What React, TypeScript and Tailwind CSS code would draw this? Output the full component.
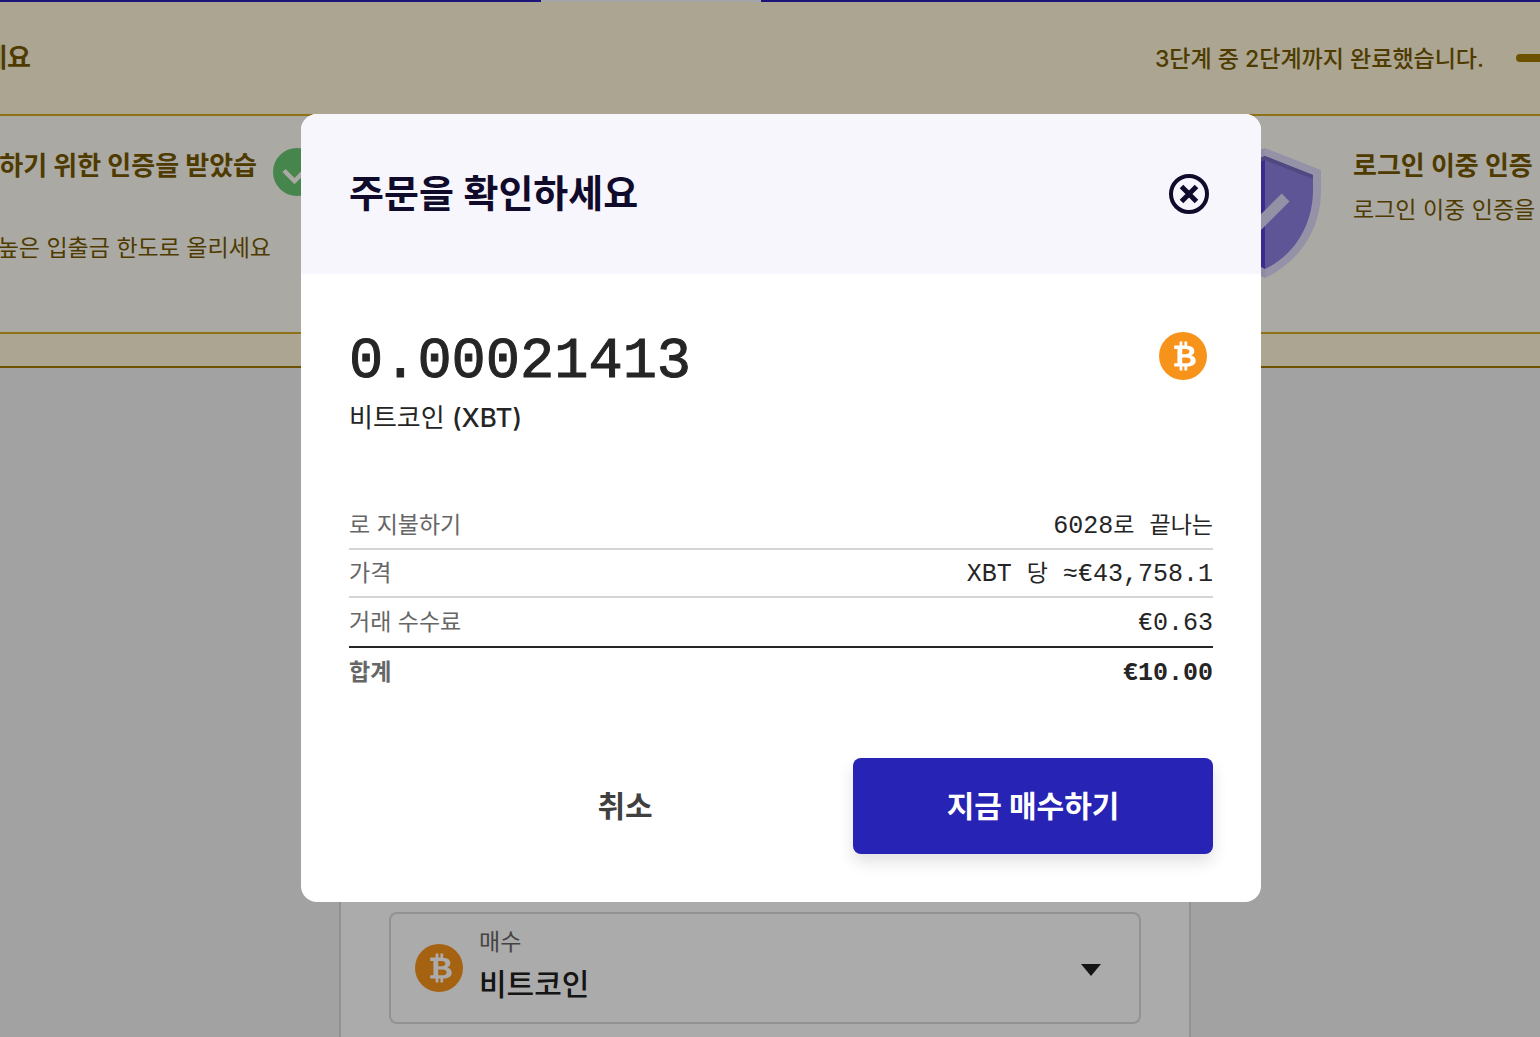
import React from "react";
import clsx from "clsx";

const CoinIcon = ({ className }: { className?: string }) => (
  <svg viewBox="0 0 48 48" className={clsx("size-12 shrink-0", className)} aria-hidden="true">
    <circle cx="24" cy="24" r="24" fill="#f7931a" />
    <path
      fill="#fff"
      fillRule="evenodd"
      d="M15.2 13.6H20.6V9.6H23.4V13.6H25.4V9.6H28.2V13.7C32.8 14 35.3 15.9 35.3 19C35.3 21.2 34.2 22.6 32.2 23.4C35 24 36.7 25.9 36.7 28.7C36.7 32.3 33.8 34.3 28.2 34.5V38.6H25.4V34.6H23.4V38.6H20.6V34.6H15.2V31.2H18.4V17H15.2ZM23.2 17V22.2H26.6C29.2 22.2 30.4 21.3 30.4 19.6C30.4 17.9 29.2 17 26.6 17ZM23.2 25.6V31.2H27.2C30.2 31.2 31.6 30.3 31.6 28.4C31.6 26.5 30.2 25.6 27.2 25.6Z"
    />
  </svg>
);

const ShieldIcon = () => (
  <svg viewBox="0 0 112 130" className="h-[130px] w-28 shrink-0" aria-hidden="true">
    <path fill="#d6cff8" d="M56 0L0 22V42C0 82 22 114 56 130Z" />
    <path fill="#dfdafb" d="M56 0L112 22V42C112 82 90 114 56 130Z" />
    <path fill="#5640d6" d="M56 8L8 27V42C8 78 28 108 56 121Z" />
    <path fill="#8d7fe0" d="M56 8L104 27V42C104 78 84 108 56 121Z" />
    <path fill="#766dc0" d="M56 8L104 27V31L56 12L8 31V27Z" />
    <path fill="#dcd8f8" d="M72.7 45.5L80.5 53.5L46 88L28 70L36 62L46 72Z" />
  </svg>
);

const Hangul = ({ children }: { children: React.ReactNode }) => (
  <span className="text-[23px]">{children}</span>
);

const rows = [
  { label: "로 지불하기", value: <>6028<Hangul>로</Hangul> <Hangul>끝나는</Hangul></>, line: "h-12 border-b-2 border-[#d5d5d5]" },
  { label: "가격", value: <>XBT <Hangul>당</Hangul> ≈€43,758.1</>, line: "h-12 border-b-2 border-[#d5d5d5]" },
  { label: "거래 수수료", value: "€0.63", line: "h-[50px] border-b-2 border-[#252525]" },
  { label: "합계", value: "€10.00", line: "h-12", total: true },
];

const VerificationBanner = () => (
  <section className="text-[#765900]">
    {/* Navigation edge */}
    <div className="flex h-0.5 bg-[#2a1eb3]">
      <div className="ml-[541px] w-[220px] bg-[#f7f5ff]" />
    </div>

    {/* Progress header */}
    <div className="flex h-[114px] items-center justify-between border-b-2 border-[#d5aa24] bg-[#fff7da]">
      <div className="flex w-[31px] justify-end overflow-hidden">
        <h2 className="text-[26px] leading-10 font-bold whitespace-nowrap">세요</h2>
      </div>
      <div className="flex items-center gap-8">
        <p className="pt-0.5 text-[23px] leading-8 font-medium">3단계 중 2단계까지 완료했습니다.</p>
        <div className="h-2 w-6 rounded-l-full bg-[#a17a00]" />
      </div>
    </div>

    {/* Steps */}
    <div className="flex h-[218px] items-start border-b-2 border-[#d5aa24] bg-[#fffdf5] pt-8">
      <div className="flex w-[273px] flex-col items-end overflow-hidden">
        <h3 className="pr-4 text-[26px] leading-9 font-bold whitespace-nowrap">하기 위한 인증을 받았습</h3>
        <p className="mt-12 pr-0.5 text-[23px] leading-8 whitespace-nowrap">높은 입출금 한도로 올리세요</p>
      </div>
      <svg viewBox="0 0 48 48" className="size-12 shrink-0" aria-hidden="true">
        <circle cx="24" cy="24" r="24" fill="#69c671" />
        <path d="M11 22.500L21.500 33L37 17.500" fill="none" stroke="#fffdf5" strokeWidth="4.500" />
      </svg>
      <div className="ml-auto flex gap-8">
        <ShieldIcon />
        <div className="w-[187px] overflow-hidden whitespace-nowrap">
          <h3 className="text-[26px] leading-9 font-bold">로그인 이중 인증</h3>
          <p className="mt-2.5 text-[23px] leading-8">로그인 이중 인증을</p>
        </div>
      </div>
    </div>

    <div className="h-[34px] border-b-2 border-[#a17a00] bg-[#fff7da]" />
  </section>
);

const BuyForm = () => (
  <section className="mx-auto mt-20 w-full max-w-[862px] pr-[10px]">
    <div className="border-2 border-[#dadada] bg-white px-12 pt-[462px] pb-12">
      <div className="flex h-28 items-center rounded-lg border-2 border-[#dadada] px-6">
        <CoinIcon />
        <div className="relative ml-4 flex flex-1 flex-col">
          <label htmlFor="asset" className="text-[23px] leading-8 text-[#666]">
            매수
          </label>
          <select
            id="asset"
            className="h-[52px] w-full appearance-none bg-transparent text-[30px] leading-10 font-medium text-[#202020]"
          >
            <option>비트코인</option>
          </select>
          <svg
            viewBox="0 0 20 12"
            className="pointer-events-none absolute right-3.5 bottom-[34px] h-3 w-5"
            aria-hidden="true"
          >
            <path d="M0 0H20L10 12Z" fill="#202020" />
          </svg>
        </div>
      </div>
    </div>
  </section>
);

const OrderDialog = () => (
  <div
    role="dialog"
    aria-modal="true"
    aria-labelledby="order-title"
    className="w-full max-w-[960px] overflow-hidden rounded-2xl bg-white text-[#252525]"
  >
    <header className="flex h-40 items-center justify-between bg-[#f7f6fd] px-12 text-[#100b2b]">
      <h1 id="order-title" className="pb-0.5 text-[38px] leading-[56px] font-semibold">
        주문을 확인하세요
      </h1>
      <button type="button" aria-label="닫기">
        <svg viewBox="0 0 48 48" className="size-12" fill="none" stroke="currentColor" strokeWidth="4">
          <circle cx="24" cy="24" r="18" />
          <path d="M16.500 16.500L31.500 31.500M31.500 16.500L16.500 31.500" strokeWidth="5" />
        </svg>
      </button>
    </header>

    <div className="px-12 pt-12 pb-12">
      <div className="flex items-start justify-between">
        <div>
          <p className="pt-1 font-['Liberation_Mono',monospace] text-[57px] leading-[72px] [-webkit-text-stroke:1px_#252525]">
            0.00021413
          </p>
          <p className="text-[26px] leading-10">
            비트코인 <span className="font-medium">(XBT)</span>
          </p>
        </div>
        <CoinIcon className="mt-2.5 mr-1.5" />
      </div>

      <table className="mt-16 w-full border-separate border-spacing-0">
        <tbody>
          {rows.map((row) => (
            <tr key={row.label}>
              <th
                scope="row"
                className={clsx("p-0 text-left text-[23px] leading-8 text-[#666]", row.line, row.total ? "font-bold" : "font-normal")}
              >
                {row.label}
              </th>
              <td
                className={clsx(
                  "p-0 pt-1 text-right font-['Liberation_Mono','Noto_Sans_CJK_KR',monospace] text-[25px] leading-8",
                  row.line,
                  row.total && "font-bold"
                )}
              >
                {row.value}
              </td>
            </tr>
          ))}
        </tbody>
      </table>

      <div className="mt-[62px] flex justify-end gap-12">
        <button type="button" className="h-24 w-[360px] rounded-lg text-[30px] font-semibold text-[#404040]">
          취소
        </button>
        <button
          type="button"
          className="h-24 w-[360px] rounded-lg bg-[#2723b5] text-[30px] font-bold text-white shadow-[0_8px_16px_rgba(0,0,0,0.12)]"
        >
          지금 매수하기
        </button>
      </div>
    </div>
  </div>
);

export default function App() {
  return (
    <div className="h-screen overflow-hidden bg-[#f2f2f2] font-['Inter','Noto_Sans_CJK_KR',sans-serif]">
      <VerificationBanner />
      <BuyForm />

      {/* Backdrop */}
      <div className="fixed inset-0 flex items-start justify-center bg-black/33 pt-[114px] pl-[22px]">
        <OrderDialog />
      </div>
    </div>
  );
}
